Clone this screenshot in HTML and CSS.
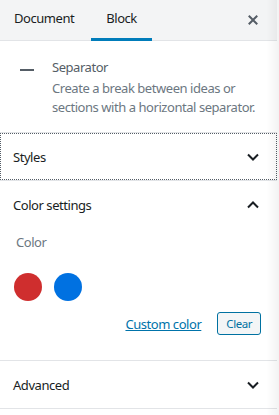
FILE: index.html
```html
<!DOCTYPE html>
<html lang="en">
<head>
    <meta charset="UTF-8">
    <meta name="viewport" content="width=device-width, initial-scale=1.0">
    <title>Block settings</title>
    <link rel="stylesheet" href="styles.css">
</head>
<body>
    <div class="sidebar">
        <div class="sidebar-header">
            <button class="tab">Document</button>
            <button class="tab active">Block</button>
            <button class="close-button" aria-label="Close settings">
                <svg width="20" height="20" viewBox="0 0 20 20"><path d="M14.95 6.46L11.41 10l3.54 3.54-1.41 1.41L10 11.42l-3.53 3.53-1.42-1.42L8.58 10 5.05 6.47l1.42-1.42L10 8.58l3.54-3.53z" fill="currentColor"/></svg>
            </button>
        </div>

        <div class="block-card">
            <span class="block-icon"></span>
            <div class="block-info">
                <h2 class="block-title">Separator</h2>
                <p class="block-description">Create a break between ideas or sections with a horizontal separator.</p>
            </div>
        </div>

        <div class="panel focused">
            <button class="panel-toggle">
                Styles
                <svg class="chevron" width="20" height="20" viewBox="0 0 20 20"><path d="M5 7.5l5 5 5-5" fill="none" stroke="currentColor" stroke-width="2"/></svg>
            </button>
        </div>

        <div class="panel open">
            <button class="panel-toggle">
                Color settings
                <svg class="chevron" width="20" height="20" viewBox="0 0 20 20"><path d="M5 12.5l5-5 5 5" fill="none" stroke="currentColor" stroke-width="2"/></svg>
            </button>
            <div class="panel-body">
                <div class="field-label">Color</div>
                <div class="swatches">
                    <span class="swatch red"></span>
                    <span class="swatch blue"></span>
                </div>
                <div class="color-actions">
                    <a class="custom-link" href="#">Custom color</a>
                    <button class="clear-button">Clear</button>
                </div>
            </div>
        </div>

        <div class="panel">
            <button class="panel-toggle">
                Advanced
                <svg class="chevron" width="20" height="20" viewBox="0 0 20 20"><path d="M5 7.5l5 5 5-5" fill="none" stroke="currentColor" stroke-width="2"/></svg>
            </button>
        </div>
    </div>
</body>
</html>
```

FILE: styles.css
```css
/* General Styling */
body {
    margin: 0;
    font-family: "Noto Sans", "Open Sans", sans-serif;
    font-size: 13px;
    letter-spacing: -0.45px;
    color: #191e23;
    background: #fff;
    overflow: hidden;
}

body::after {
    content: "";
    position: fixed;
    top: 0;
    right: 0;
    width: 12px;
    height: 100%;
    background: linear-gradient(90deg, rgba(0, 0, 0, 0), rgba(0, 0, 0, 0.05));
    pointer-events: none;
}

.sidebar {
    width: 277px;
}

button {
    font-family: inherit;
    font-size: inherit;
    letter-spacing: inherit;
    background: none;
    border: none;
    padding: 0;
    cursor: pointer;
    color: inherit;
}

/* Header tabs */
.sidebar-header {
    display: flex;
    align-items: stretch;
    height: 40px;
    background: #f3f4f5;
    border-bottom: 1px solid #e2e4e7;
}

.tab {
    padding: 0 14px 2px;
    border-bottom: 3px solid transparent;
    color: #191e23;
    margin-bottom: -1px;
}

.tab.active {
    border-bottom-color: #007cba;
    padding: 0 15px 2px;
    margin-left: 3px;
}

.close-button {
    margin-left: auto;
    width: 48px;
    display: flex;
    align-items: center;
    justify-content: center;
    color: #555d66;
}

/* Block card */
.block-card {
    display: flex;
    padding: 16px 16px 15px;
    border-bottom: 1px solid #e2e4e7;
}

.block-icon {
    width: 14px;
    height: 2px;
    background: #555d66;
    margin: 12px 18px 0 4px;
    flex-shrink: 0;
}

.block-title {
    margin: 1px 0 3px;
    font-size: 13px;
    font-weight: 400;
    color: #555d66;
}

.block-description {
    margin: 0;
    line-height: 19px;
    color: #6c7781;
}

/* Panels */
.panel {
    border-bottom: 1px solid #e2e4e7;
}

.panel-toggle {
    display: flex;
    align-items: center;
    justify-content: space-between;
    width: 100%;
    height: 47px;
    padding: 0 14px 0 13px;
    color: #191e23;
    text-align: left;
}

.panel.focused .panel-toggle {
    outline: 1px dotted #555d66;
    outline-offset: -1px;
}

.chevron {
    color: #191e23;
}

.panel-body {
    padding: 0 16px 25px 16px;
}

.field-label {
    color: #6c7781;
    margin: 5px 0 22px;
}

.swatches {
    display: flex;
    gap: 12px;
    margin-left: -2px;
}

.swatch {
    width: 28px;
    height: 28px;
    border-radius: 50%;
}

.red {
    background: #cf2e2e;
}

.blue {
    background: #0071e1;
}

.color-actions {
    display: flex;
    justify-content: flex-end;
    align-items: center;
    gap: 16px;
    margin-top: 11px;
}

.custom-link {
    color: #0073aa;
}

.clear-button {
    height: 23px;
    padding: 0 8px;
    border: 1px solid #0071a1;
    border-radius: 3px;
    color: #0071a1;
    font-size: 11.5px;
    background: #f3f5f6;
}
```
